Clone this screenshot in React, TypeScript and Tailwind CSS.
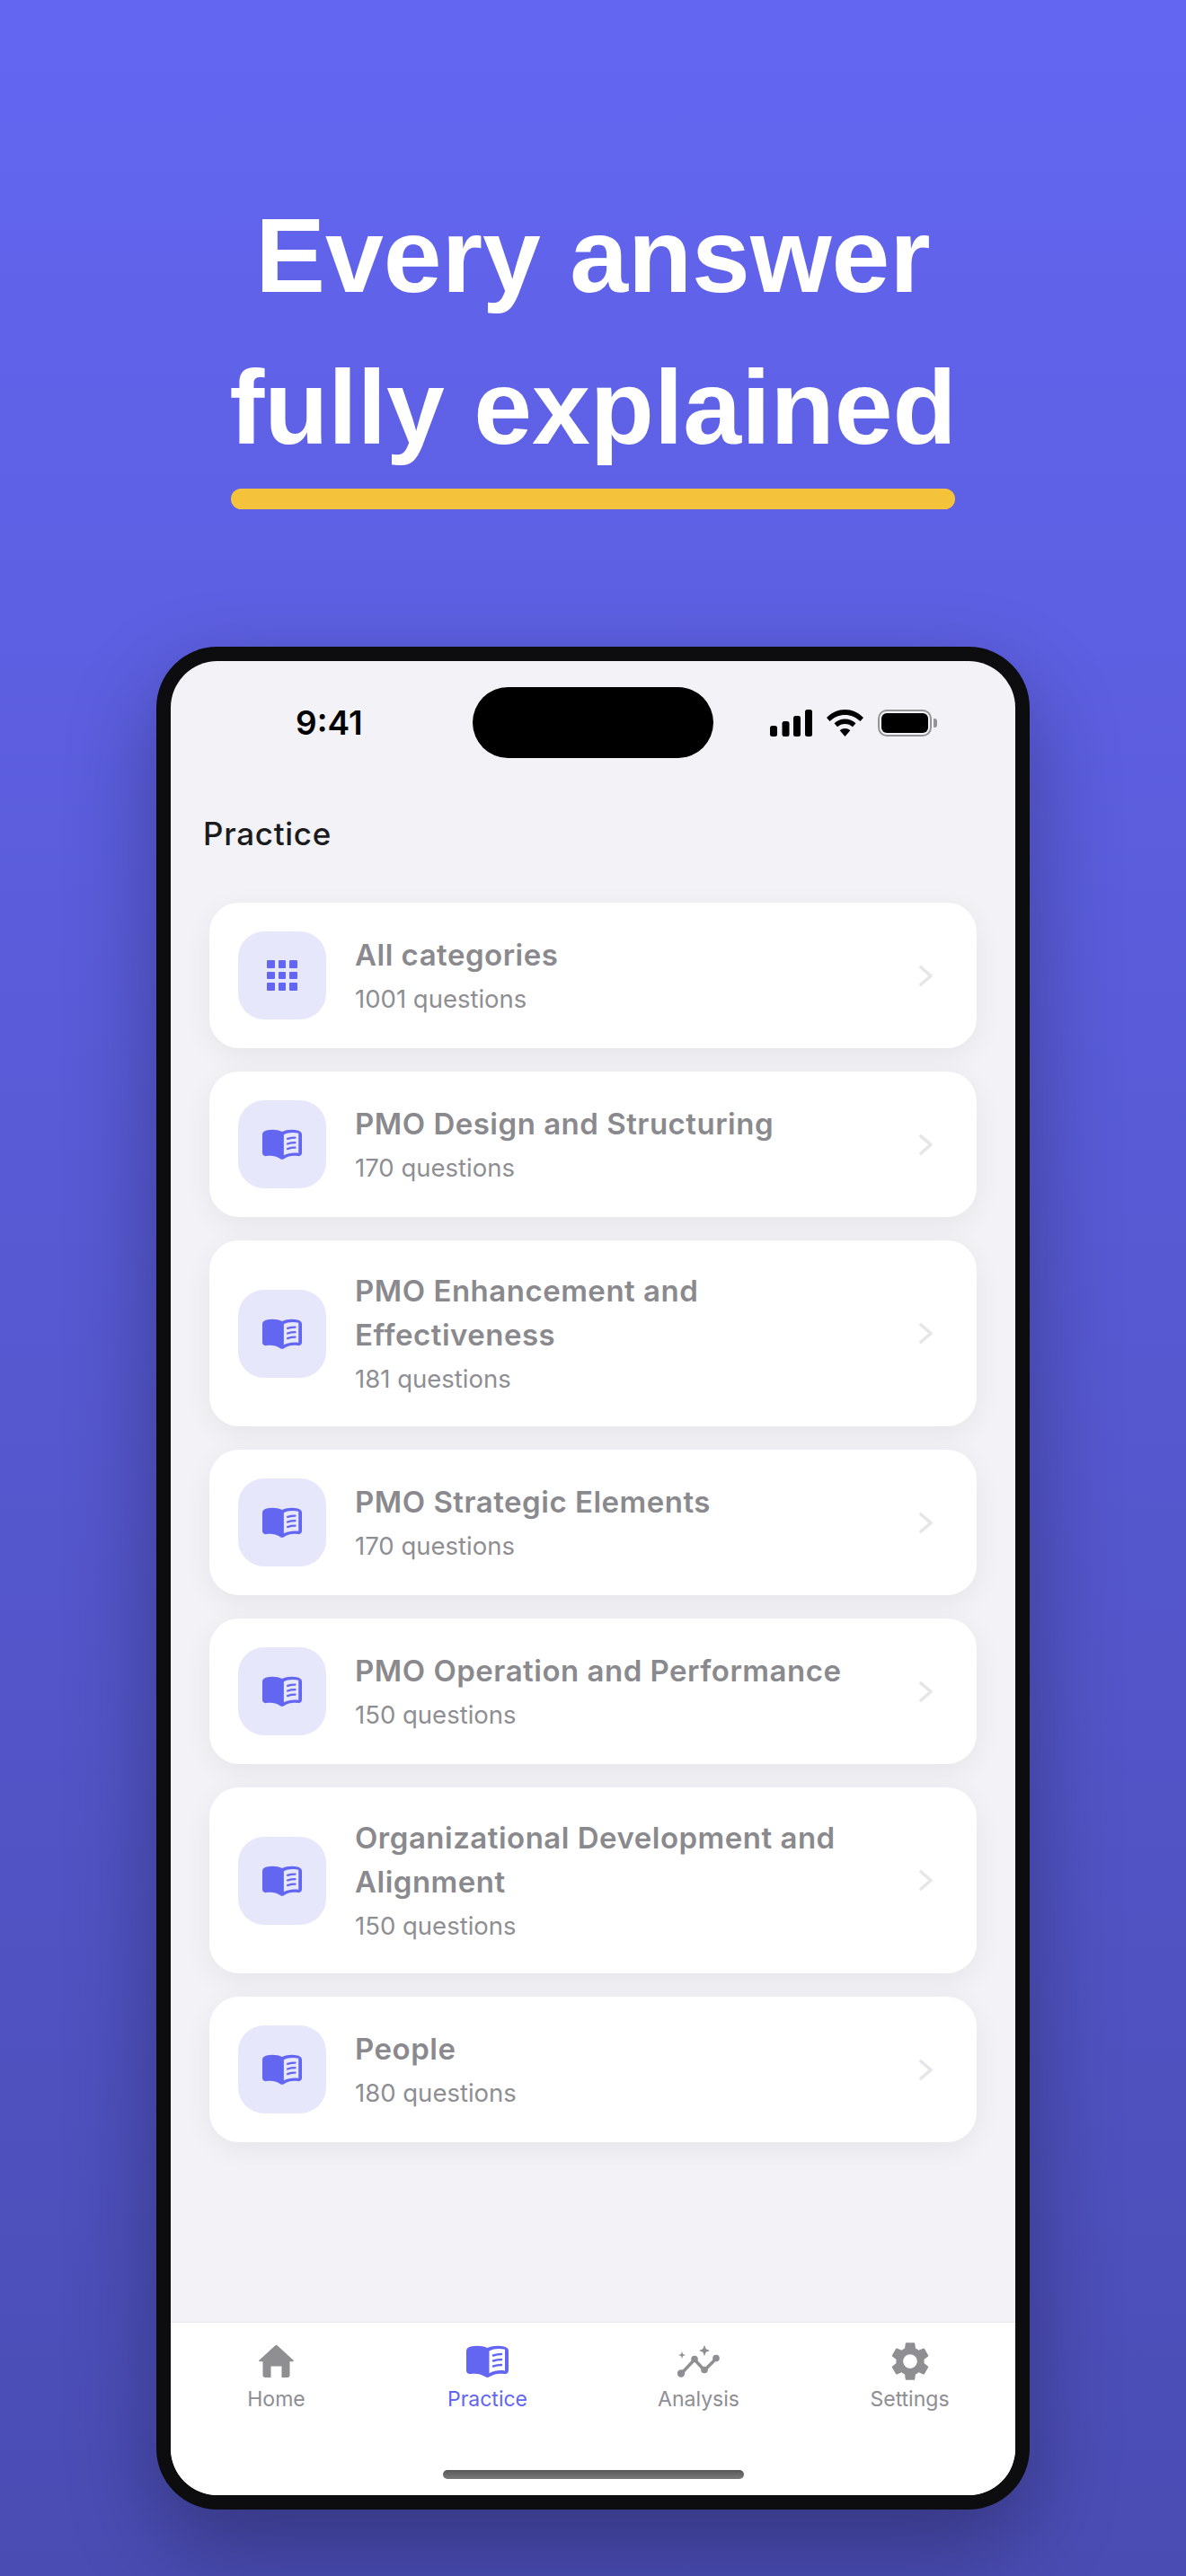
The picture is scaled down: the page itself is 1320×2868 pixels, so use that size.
import { MdSettings } from "react-icons/md";

const CATEGORIES = [
  { title: "PMO Design and Structuring", count: 170 },
  { title: "PMO Enhancement and Effectiveness", count: 181 },
  { title: "PMO Strategic Elements", count: 170 },
  { title: "PMO Operation and Performance", count: 150 },
  { title: "Organizational Development and Alignment", count: 150 },
  { title: "People", count: 180 },
];

function BookIcon({ className, page }: { className: string; page: string }) {
  return (
    <svg viewBox="0 0 47 36" className={className} aria-hidden="true">
      <path
        fill="#6366f1"
        d="M5 1.5C11 0 18 .5 23.5 3 29 .5 36 0 42 1.5c3 .6 5 2.5 5 5V28c0 3-2 4.5-5 4-6-1-11 0-16 3-1.6 1.2-3.4 1.2-5 0-5-3-10-4-16-3-3 .5-5-1-5-4V6.5c0-2.500 2-4.400 5-5Z"
      />
      <path fill={page} d="M25.500 6.500C30 4.200 36 3.400 43 4.800V28.500c-6-1-12-.2-17.500 2.700Z" />
      <path
        fill="none"
        stroke="#6366f1"
        strokeWidth="2.400"
        strokeLinecap="round"
        d="M30 11.500c3-1.100 6-1.500 9-1.500M30 17.500c3-1.100 6-1.500 9-1.500M30 23.500c3-1.100 6-1.500 9-1.500"
      />
    </svg>
  );
}

function Chevron() {
  return (
    <svg viewBox="0 0 15 23" className="h-[23px] w-[15px] shrink-0" aria-hidden="true">
      <path
        d="M2 2l11 9.500L2 21"
        fill="none"
        stroke="#e5e5ea"
        strokeWidth="3.600"
        strokeLinecap="round"
        strokeLinejoin="round"
      />
    </svg>
  );
}

function GridIcon() {
  return (
    <div className="grid grid-cols-[repeat(3,8.500px)] gap-[4px]">
      {Array.from({ length: 9 }).map((_, i) => (
        <div key={i} className="h-[8.500px] w-[8.500px] rounded-[1px] bg-[#6366f1]" />
      ))}
    </div>
  );
}

function CategoryCard({
  title,
  count,
  icon,
}: {
  title: string;
  count: number;
  icon: React.ReactNode;
}) {
  return (
    <div className="flex items-center rounded-[33px] bg-white py-[32px] pl-[32px] pr-[49px] shadow-[0_8px_32px_rgba(0,0,0,0.06)]">
      <div className="flex h-[98px] w-[98px] shrink-0 items-center justify-center rounded-[29px] bg-[#e7e7fc]">
        {icon}
      </div>
      <div className="ml-[32px] mr-[60px] min-w-0 flex-1">
        <div className="text-[33px] font-semibold leading-[49px] tracking-[0.5px] text-[#8a8a8e]">
          {title}
        </div>
        <div className="-mb-[2px] mt-[2px] text-[27.500px] leading-[45px] text-[#8e8e93]">
          {count} questions
        </div>
      </div>
      <Chevron />
    </div>
  );
}

function StatusIcons() {
  return (
    <div className="ml-[63px] flex items-center">
      <svg viewBox="0 0 47 30" className="h-[30px] w-[47px]" aria-hidden="true">
        <rect x="0" y="18" width="8" height="12" rx="2.500" />
        <rect x="13.500" y="13" width="8" height="17" rx="2.500" />
        <rect x="26" y="7" width="8" height="23" rx="2.500" />
        <rect x="39" y="0" width="8" height="30" rx="2.500" />
      </svg>
      <svg viewBox="0 0 41 30" className="ml-[16px] h-[30px] w-[41px]" aria-hidden="true">
        <path d="M20.500 0C28 0 35 3 41 9l-3.500 4C32.500 8.500 27 6 20.500 6S8.500 8.500 3.500 13L0 9C6 3 13 0 20.500 0Z" />
        <path d="M20.500 10.500c4.600 0 8.700 1.700 12 4.800l-3.500 4c-2.400-2.100-5.200-3.300-8.500-3.300s-6.100 1.200-8.500 3.300l-3.500-4c3.300-3.100 7.400-4.800 12-4.800Z" />
        <path d="M20.500 21c2.200 0 4.200.8 5.800 2.200L20.500 30l-5.800-6.800c1.600-1.400 3.600-2.200 5.800-2.200Z" />
      </svg>
      <div className="ml-[16px] flex h-[30px] w-[60px] items-center justify-center rounded-[10px] border-[2px] border-[#949497] p-[2px]">
        <div className="h-full w-full rounded-[6px] bg-black" />
      </div>
      <div className="ml-[2px] h-[10px] w-[4px] rounded-r-[3px] bg-[#949497]" />
    </div>
  );
}

function HomeIcon() {
  return (
    <svg viewBox="0 0 39 36" className="h-[36px] w-[39px]" fill="#8e8e93" aria-hidden="true">
      <path d="M17.900.700a2.400 2.400 0 0 1 3.200 0L38.500 16.800c.6.600.3 1.400-.5 1.400h-3.500v15.300c0 1.400-1.100 2.500-2.500 2.500h-6.500V23.500h-12V36H7c-1.400 0-2.500-1.100-2.500-2.500V18.200H1c-.8 0-1.100-.8-.5-1.400Z" />
    </svg>
  );
}

function AnalysisIcon() {
  return (
    <svg viewBox="0 0 47 36" className="h-[36px] w-[47px]" fill="#8e8e93" aria-hidden="true">
      <path
        d="M4 32L19 16l11 12L43 15"
        fill="none"
        stroke="#8e8e93"
        strokeWidth="3.500"
        strokeLinejoin="round"
      />
      <circle cx="4" cy="31.500" r="4.200" />
      <circle cx="19" cy="15.500" r="3.800" />
      <circle cx="30" cy="27.500" r="3.800" />
      <circle cx="43" cy="14.500" r="3.800" />
      <path d="M30 0l1.800 4.200L36 6l-4.200 1.800L30 12l-1.800-4.200L24 6l4.200-1.800Z" />
      <path d="M5 7l1 3 3 1-3 1-1 3-1-3-3-1 3-1Z" />
    </svg>
  );
}

function Tab({
  label,
  active,
  children,
}: {
  label: string;
  active?: boolean;
  children: React.ReactNode;
}) {
  return (
    <div className="flex w-[235px] flex-col items-center">
      <div className="flex h-[44px] items-center justify-center">{children}</div>
      <div
        className={
          active
            ? "mt-[4px] text-[23px] leading-[32px] text-[#6366f1]"
            : "mt-[4px] text-[23px] leading-[32px] text-[#8e8e93]"
        }
      >
        {label}
      </div>
    </div>
  );
}

export default function App() {
  return (
    <div className="flex h-[2868px] w-[1320px] flex-col items-center overflow-hidden bg-gradient-to-b from-[#6366f1] to-[#4a4cb3] font-['Inter',sans-serif]">
      {/* headline */}
      <div className="flex flex-col items-center pt-[201px]">
        <h1 className="text-center font-['Liberation_Sans',Arial,sans-serif] text-[116.500px] font-bold leading-[169px] text-white">
          Every answer
          <br />
          fully explained
        </h1>
        <div className="mt-[5px] h-[23px] w-[806px] rounded-full bg-[#f5c33b]" />
      </div>

      {/* phone */}
      <div className="mt-[153px] h-[2074px] w-[972px] shrink-0 rounded-[68px] bg-[#0d0d0f] p-[16px] shadow-[0_40px_100px_rgba(0,0,0,0.3)]">
        <div className="flex h-full flex-col overflow-hidden rounded-[52px] bg-[#f2f2f7]">
          <div className="flex items-center pl-[139px] pt-[29px]">
            <div className="w-[197px] text-[37px] font-semibold leading-[79px] text-black">9:41</div>
            <div className="h-[79px] w-[268px] rounded-[40px] bg-black" />
            <StatusIcons />
          </div>

          <div className="mt-[60px] px-[36px] text-[35px] font-medium leading-[48px] tracking-[0.7px] text-[#1c1c1e]">
            Practice
          </div>

          <div className="mt-[53px] flex flex-col gap-[26px] px-[43px]">
            <CategoryCard title="All categories" count={1001} icon={<GridIcon />} />
            {CATEGORIES.map((c) => (
              <CategoryCard
                key={c.title}
                title={c.title}
                count={c.count}
                icon={<BookIcon className="h-[34px] w-[44px]" page="#e7e7fc" />}
              />
            ))}
          </div>

          {/* tab bar */}
          <div className="mt-auto flex h-[193px] flex-col border-t border-[#e5e5ea] bg-white">
            <div className="flex pt-[21px]">
              <Tab label="Home">
                <HomeIcon />
              </Tab>
              <Tab label="Practice" active>
                <BookIcon className="h-[36px] w-[47px]" page="#ffffff" />
              </Tab>
              <Tab label="Analysis">
                <AnalysisIcon />
              </Tab>
              <Tab label="Settings">
                <MdSettings className="h-[52px] w-[52px] text-[#8e8e93]" />
              </Tab>
            </div>
            <div className="mb-[18px] mt-auto h-[10px] w-[335px] self-center rounded-full bg-gradient-to-b from-[#585858] to-[#7a7a7a]" />
          </div>
        </div>
      </div>
    </div>
  );
}
